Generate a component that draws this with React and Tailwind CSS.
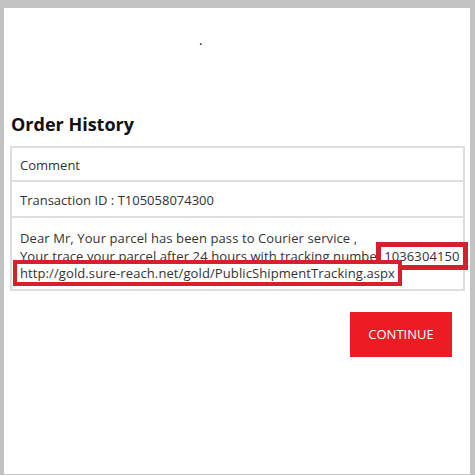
export default function App() {
  const font = { fontFamily: '"Open Sans", "Noto Sans", sans-serif' };
  return (
    <div className="w-[475px] h-[475px] bg-[#c3c3c3] pt-2 pl-1" style={font}>
      <div className="w-[466px] h-[466px] bg-white flex flex-col">
        <div className="h-[103px] relative">
          <span className="absolute left-[195px] top-[26px] text-[13px] text-black leading-none">.</span>
        </div>
        <h2 className="text-[18px] font-bold leading-[26px] text-[#111] pl-[7px]">Order History</h2>
        <div className="mt-[9px] ml-[6px] w-[455px] border-2 border-[#dedede] text-[13px] text-[#333] flex flex-col">
          <div className="h-[34px] flex items-center pl-[8px] pt-[3px] border-b-2 border-[#dedede]">Comment</div>
          <div className="h-[36px] flex items-center pl-[8px] pt-[4px] border-b-2 border-[#dedede]">Transaction ID : T105058074300</div>
          <div className="h-[71px] pl-[8px] pt-[12px] leading-[17.5px] whitespace-nowrap tracking-[0.1px]">
            Dear Mr, Your parcel has been pass to Courier service ,<br />
            Your trace your parcel after 24 hours with tracking number
            <span className="outline-[5px] outline outline-[#d5202e] ml-[-1px] px-[3px] bg-white relative">1036304150</span>
            <br />
            <span className="outline-4 outline outline-[#d5202e] ml-[-3px] pl-[3px] pr-[3px] bg-white relative">http://gold.sure-reach.net/gold/PublicShipmentTracking.aspx</span>
          </div>
        </div>
        <div className="flex justify-end pr-[18px] mt-[21px]">
          <button className="w-[102px] h-[45px] bg-[#ec1c24] text-white text-[13px] flex items-center justify-center" style={font}>
            CONTINUE
          </button>
        </div>
      </div>
    </div>
  );
}
